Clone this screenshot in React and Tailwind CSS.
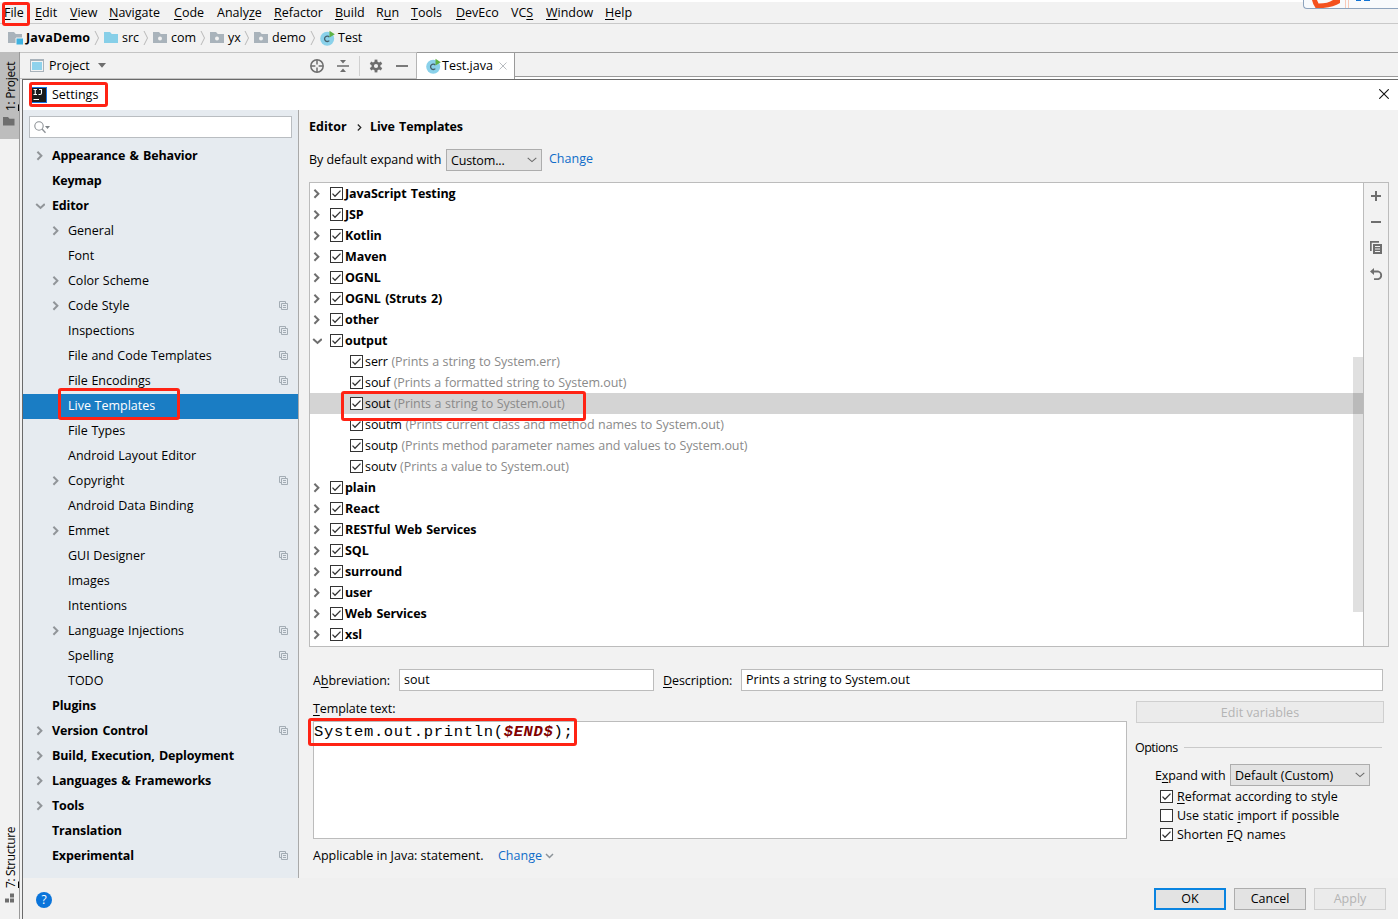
import React from "react";

/* Text with one underlined mnemonic letter, marked by a preceding "_" */
function Mn({ t }) {
  const i = t.indexOf("_");
  if (i < 0) return t;
  return (
    <>
      {t.slice(0, i)}
      <span className="underline decoration-1 underline-offset-2">{t[i + 1]}</span>
      {t.slice(i + 2)}
    </>
  );
}

const MENU = [
  ["_File", "w-[31px]"],
  ["_Edit", "w-[35px]"],
  ["_View", "w-[39px]"],
  ["_Navigate", "w-[65px]"],
  ["_Code", "w-[43px]"],
  ["Analy_ze", "w-[57px]"],
  ["_Refactor", "w-[61px]"],
  ["_Build", "w-[41px]"],
  ["R_un", "w-[35px]"],
  ["_Tools", "w-[45px]"],
  ["_DevEco", "w-[55px]"],
  ["VC_S", "w-[35px]"],
  ["_Window", "w-[59px]"],
  ["_Help", "w-[40px]"],
];

function ClassIcon() {
  return (
    <svg width="16" height="16" viewBox="0 0 16 16" className="shrink-0">
      <circle cx="7.2" cy="8.7" r="7" fill="#8ad1ea" />
      <path d="M9.3 7A2.7 2.7 0 1 0 9.3 10.6" fill="none" stroke="#45606c" strokeWidth="1.3" />
      <path d="M9.5 0.8L14.8 4.2L9.5 7.6Z" fill="#5fb244" />
    </svg>
  );
}

function Folder({ kind }) {
  return (
    <svg width="16" height="14" viewBox="0 0 16 14" className="shrink-0">
      <path d="M0 1H6L7.8 3H14V12H0Z" fill={kind === "src" ? "#87cfe8" : "#a9b3bb"} />
      {kind === "pkg" && <circle cx="7" cy="7.4" r="2" fill="#f2f2f2" />}
      {kind === "module" && <path d="M8 7H15.5V14H8Z" fill="#3fb2e0" stroke="#f2f2f2" strokeWidth="1" />}
    </svg>
  );
}

function Sep() {
  return (
    <svg width="6" height="16" viewBox="0 0 6 16" className="shrink-0">
      <path d="M1 1L4.5 8L1 15" fill="none" stroke="#b9b9b9" strokeWidth="1" />
    </svg>
  );
}

function Arrow({ open, dark }) {
  const c = dark ? "#6e6e6e" : "#919599";
  return (
    <svg width="10" height="10" viewBox="0 0 10 10" className="shrink-0">
      <path d={open ? "M1.2 3L5.5 7L9.8 3" : "M2.4 0.8L6.4 4.8L2.4 8.8"} fill="none" stroke={c} strokeWidth="2" />
    </svg>
  );
}

function Chevron() {
  return (
    <svg width="10" height="6" viewBox="0 0 10 6" className="shrink-0">
      <path d="M0.7 0.8L5 4.6L9.3 0.8" fill="none" stroke="#6b6b6b" strokeWidth="1.1" />
    </svg>
  );
}

function CopyMark() {
  return (
    <svg width="9" height="9" viewBox="0 0 9 9" className="shrink-0">
      <path d="M2 6.5H0.5V0.5H6.5V2M2.5 2.5H8.5V8.5H2.5ZM4 4.5H7M4 6.5H7" fill="none" stroke="#a3acb4" strokeWidth="1" />
    </svg>
  );
}

function Check({ on = true }) {
  return (
    <svg width="13" height="13" viewBox="0 0 13 13" className="shrink-0">
      <rect x="0.5" y="0.5" width="12" height="12" fill="#fff" stroke="#333" />
      {on && <path d="M2.5 6.6L5 9.2L10.5 3.6" fill="none" stroke="#333" strokeWidth="1.3" />}
    </svg>
  );
}

// [label, level, arrow ("r" closed, "d" open, "" none), has project mark]
const NAV = [
  ["Appearance & Behavior", 0, "r", 0],
  ["Keymap", 0, "", 0],
  ["Editor", 0, "d", 0],
  ["General", 1, "r", 0],
  ["Font", 1, "", 0],
  ["Color Scheme", 1, "r", 0],
  ["Code Style", 1, "r", 1],
  ["Inspections", 1, "", 1],
  ["File and Code Templates", 1, "", 1],
  ["File Encodings", 1, "", 1],
  ["Live Templates", 1, "", 0],
  ["File Types", 1, "", 0],
  ["Android Layout Editor", 1, "", 0],
  ["Copyright", 1, "r", 1],
  ["Android Data Binding", 1, "", 0],
  ["Emmet", 1, "r", 0],
  ["GUI Designer", 1, "", 1],
  ["Images", 1, "", 0],
  ["Intentions", 1, "", 0],
  ["Language Injections", 1, "r", 1],
  ["Spelling", 1, "", 1],
  ["TODO", 1, "", 0],
  ["Plugins", 0, "", 0],
  ["Version Control", 0, "r", 1],
  ["Build, Execution, Deployment", 0, "r", 0],
  ["Languages & Frameworks", 0, "r", 0],
  ["Tools", 0, "r", 0],
  ["Translation", 0, "", 0],
  ["Experimental", 0, "", 1],
];

const TEMPLATES = [
  ["JavaScript Testing"],
  ["JSP"],
  ["Kotlin"],
  ["Maven"],
  ["OGNL"],
  ["OGNL (Struts 2)"],
  ["other"],
  ["output"],
  ["serr", "(Prints a string to System.err)"],
  ["souf", "(Prints a formatted string to System.out)"],
  ["sout", "(Prints a string to System.out)"],
  ["soutm", "(Prints current class and method names to System.out)"],
  ["soutp", "(Prints method parameter names and values to System.out)"],
  ["soutv", "(Prints a value to System.out)"],
  ["plain"],
  ["React"],
  ["RESTful Web Services"],
  ["SQL"],
  ["surround"],
  ["user"],
  ["Web Services"],
  ["xsl"],
];

function MenuBar() {
  return (
    <div className="flex h-[24px] shrink-0 border-t-2 border-b border-t-white border-b-[#c9c9c9] pl-1">
      {MENU.map(([t, w]) => (
        <div key={t} className={"flex shrink-0 items-center whitespace-nowrap " + w}>
          <span><Mn t={t} /></span>
        </div>
      ))}
    </div>
  );
}

function NavBar() {
  return (
    <div className="flex h-[28px] shrink-0 items-center pl-2">
      <div className="flex w-[86px] items-center gap-[2px]"><Folder kind="module" /><b className="tracking-[0.15px]">JavaDemo</b></div>
      <div className="flex w-[10px]"><Sep /></div>
      <div className="flex w-[39px] items-center gap-[2px]"><Folder kind="src" />src</div>
      <div className="flex w-[10px]"><Sep /></div>
      <div className="flex w-[47px] items-center gap-[2px]"><Folder kind="pkg" />com</div>
      <div className="flex w-[10px]"><Sep /></div>
      <div className="flex w-[34px] items-center gap-[2px]"><Folder kind="pkg" />yx</div>
      <div className="flex w-[10px]"><Sep /></div>
      <div className="flex w-[56px] items-center gap-[2px]"><Folder kind="pkg" />demo</div>
      <div className="flex w-[10px]"><Sep /></div>
      <div className="flex items-center gap-[2px]"><ClassIcon />Test</div>
    </div>
  );
}

function LeftStripe() {
  return (
    <div className="flex w-[20px] shrink-0 flex-col justify-between border-r border-[#9a9a9a]">
      <div className="flex h-[87px] flex-col items-center bg-[#bdbdbd] pt-[6px]">
        <div className="ml-[2px] h-[53px] rotate-180 text-[12px] leading-[16px] tracking-[-0.3px] whitespace-nowrap [writing-mode:vertical-rl]">
          <span className="underline underline-offset-1">1</span>: Project
        </div>
        <svg width="12" height="10" viewBox="0 0 12 10" className="mt-[5px] -ml-px">
          <path d="M0 1H5L6.5 2.7H11.5V9.5H0Z" fill="#6e6e6e" />
        </svg>
      </div>
      <div className="flex h-[93px] flex-col items-center">
        <div className="ml-[2px] h-[62px] rotate-180 text-[12px] leading-[16px] tracking-[-0.35px] whitespace-nowrap [writing-mode:vertical-rl]">
          <span className="underline underline-offset-1">7</span>: Structure
        </div>
        <svg width="10" height="10" viewBox="0 0 10 10" className="mt-[5px]">
          <path d="M5 0.5H9V4.5H5ZM0 5.5H4V9.5H0ZM5 5.5H9V9.5H5Z" fill="#6e6e6e" />
        </svg>
      </div>
    </div>
  );
}

function ToolHeader() {
  return (
    <div className="flex h-[27px] shrink-0">
      <div className="flex w-[397px] shrink-0 items-center border-t border-r border-b border-[#c4c4c4] border-r-[#b5b5b5] pl-[10px]">
        <svg width="14" height="13" viewBox="0 0 14 13" className="shrink-0">
          <rect x="0.5" y="0.5" width="13" height="12" fill="#f4f4f4" stroke="#a9b3bb" />
          <rect x="0" y="0" width="14" height="2" fill="#a9b3bb" />
          <rect x="2" y="3" width="10" height="8" fill="#8fd2ec" />
        </svg>
        <span className="ml-[5px] w-[49px]">Project</span>
        <svg width="8" height="5" viewBox="0 0 8 5"><path d="M0 0H8L4 4.8Z" fill="#6e6e6e" /></svg>
        <svg width="14" height="14" viewBox="0 0 14 14" className="ml-[204px] shrink-0">
          <circle cx="7" cy="7" r="6.2" fill="none" stroke="#6e6e6e" strokeWidth="1.5" />
          <path d="M7 1V5.4M7 8.6V13M1 7H5.4M8.6 7H13" stroke="#6e6e6e" strokeWidth="1.5" />
        </svg>
        <svg width="12" height="12" viewBox="0 0 12 12" className="ml-[13px] shrink-0">
          <path d="M0 5.2H12V6.8H0ZM3 0H9L6 3.4ZM3 12H9L6 8.6Z" fill="#6e6e6e" />
        </svg>
        <div className="ml-[10px] h-[20px] w-px bg-[#d0d0d0]" />
        <svg width="14" height="14" viewBox="0 0 14 14" className="ml-[9px] shrink-0">
          <g fill="#6e6e6e">
            <rect x="5.6" y="0.6" width="2.8" height="12.8" />
            <rect x="5.6" y="0.6" width="2.8" height="12.8" transform="rotate(60 7 7)" />
            <rect x="5.6" y="0.6" width="2.8" height="12.8" transform="rotate(120 7 7)" />
          </g>
          <circle cx="7" cy="7" r="3.3" fill="none" stroke="#6e6e6e" strokeWidth="2.4" />
          <circle cx="7" cy="7" r="2.1" fill="#f2f2f2" />
        </svg>
        <div className="ml-[13px] h-[2px] w-[12px] bg-[#7a7a7a]" />
      </div>
      <div className="flex w-[98px] shrink-0 items-center border-t border-r border-[#9a9a9a] bg-white pl-[9px]">
        <ClassIcon />
        <span className="w-[57px]">Test.java</span>
        <svg width="8" height="8" viewBox="0 0 8 8"><path d="M0.5 0.5L7.5 7.5M7.5 0.5L0.5 7.5" stroke="#b8bcc0" strokeWidth="1" /></svg>
      </div>
      <div className="flex min-w-0 flex-1 flex-col bg-white">
        <div className="h-[25px] border-t border-b border-[#9a9a9a] bg-[#f2f2f2]" />
      </div>
    </div>
  );
}

function NavTree() {
  return (
    <div className="flex w-[276px] shrink-0 flex-col border-r border-[#a9a9a9] bg-[#e6ebf0]">
      <div className="mx-[6px] mt-[6px] mb-[6px] flex h-[22px] shrink-0 items-center border border-[#b9bdc1] bg-white pl-1">
        <svg width="17" height="13" viewBox="0 0 17 13">
          <circle cx="5" cy="5" r="4.2" fill="none" stroke="#8c9196" strokeWidth="1.1" />
          <path d="M8 8L11.5 11.8" stroke="#8c9196" strokeWidth="1.3" />
          <path d="M11 5H16L13.5 8Z" fill="#7f8488" />
        </svg>
      </div>
      {NAV.map(([t, lv, a, mark]) => (
        <div
          key={t}
          className={
            "flex h-[25px] shrink-0 items-center pr-[10px] pb-[2px] " +
            (lv ? "pl-[28px] [word-spacing:0.4px] " : "pl-[12px] font-bold tracking-[-0.15px] [word-spacing:1.2px] ") +
            (t === "Live Templates" ? "bg-[#1a7dc4] text-white" : "")
          }
        >
          <div className="w-[17px] shrink-0">{a && <Arrow open={a === "d"} />}</div>
          <span className="flex-1 whitespace-nowrap">{t}</span>
          {!!mark && <CopyMark />}
        </div>
      ))}
    </div>
  );
}

function TemplateList() {
  return (
    <div className="mt-[11px] ml-[10px] flex h-[465px] w-[1080px] shrink-0 border border-[#bcbcbc]">
      <div className="relative w-[1054px] shrink-0 border-r border-[#bcbcbc] bg-white">
        {TEMPLATES.map(([t, d]) => (
          <div
            key={t}
            className={
              "flex h-[21px] items-center whitespace-nowrap " +
              (d ? "pl-[40px] " : "pl-[2px] ") +
              (t === "sout" ? "bg-[#d4d4d4]" : "")
            }
          >
            {!d && <div className="flex w-[18px]"><Arrow open={t === "output"} dark /></div>}
            <Check />
            {d ? (
              <span className="ml-[2px] tracking-[-0.07px] [word-spacing:0.4px]">{t} <span className="text-[#8a8a8a]">{d}</span></span>
            ) : (
              <b className="ml-[2px] tracking-[-0.1px] [word-spacing:1.2px]">{t}</b>
            )}
          </div>
        ))}
        <div className="absolute top-[174px] right-0 h-[255px] w-[10px] bg-black/12" />
      </div>
      <div className="flex flex-1 flex-col items-center">
        <svg width="10" height="10" viewBox="0 0 10 10" className="mt-[8px]"><path d="M0 5H10M5 0V10" stroke="#6e6e6e" strokeWidth="2" /></svg>
        <svg width="10" height="2" viewBox="0 0 10 2" className="mt-[20px]"><path d="M0 1H10" stroke="#6e6e6e" strokeWidth="2" /></svg>
        <svg width="13" height="13" viewBox="0 0 13 13" className="mt-[18px]">
          <path d="M0 0H9V1.7H1.7V10H0Z" fill="#6e6e6e" />
          <rect x="3" y="3" width="9" height="10" fill="#6e6e6e" />
          <path d="M5 5.5H10M5 8H10M5 10.5H10" stroke="#f2f2f2" strokeWidth="1" />
        </svg>
        <svg width="13" height="13" viewBox="0 0 13 13" className="mt-[14px]">
          <path d="M3 3.5H8.3A4 4 0 0 1 8.3 11.2H4" fill="none" stroke="#6e6e6e" strokeWidth="1.8" />
          <path d="M0 3.5L4 0V7Z" fill="#6e6e6e" />
        </svg>
      </div>
    </div>
  );
}

function Details() {
  return (
    <>
      <div className="mt-[22px] ml-[14px] flex h-[22px] shrink-0 items-center whitespace-nowrap">
        <span className="w-[86px] pt-[2px] tracking-[-0.06px]"><Mn t="A_bbreviation:" /></span>
        <div className="flex h-[22px] w-[255px] items-center border border-[#bcbcbc] bg-white pl-1">sout</div>
        <span className="ml-[9px] w-[78px] pt-[2px] tracking-[-0.06px]"><Mn t="_Description:" /></span>
        <div className="flex h-[22px] w-[642px] items-center border border-[#bcbcbc] bg-white pl-1">Prints a string to System.out</div>
      </div>
      <div className="ml-[14px] flex h-[148px] shrink-0">
        <div className="w-[814px]">
          <div className="flex h-[30px] items-end pb-[3px]"><span className="leading-[18px] tracking-[-0.1px]"><Mn t="_Template text:" /></span></div>
          <div className="h-[118px] border border-[#bcbcbc] bg-white font-['Courier_New','Liberation_Mono',monospace] text-[15.5px] leading-[20px] tracking-[0.68px]">
            System.out.println(<span className="font-bold text-[#800000] italic">$END$</span>);
          </div>
        </div>
        <div className="ml-[8px] flex w-[250px] flex-col">
          <div className="mt-[10px] ml-px flex h-[22px] w-[248px] shrink-0 items-center justify-center border border-[#cfcfcf] bg-[#ebebeb] pt-px tracking-[0.05px] text-[#b4b4b4]">Edit variables</div>
          <div className="mt-[14px] flex h-[20px] shrink-0 items-center gap-[6px]"><span className="pt-px tracking-[-0.5px]">Options</span><div className="mr-[3px] h-px flex-1 bg-[#cacaca]" /></div>
          <div className="mt-[7px] ml-[20px] flex h-[22px] shrink-0 items-center">
            <span className="w-[75px] pt-px tracking-[-0.1px] whitespace-nowrap"><Mn t="E_xpand with" /></span>
            <div className="flex h-[22px] w-[140px] items-center justify-between border border-[#adadad] bg-[#e3e3e3] pr-1 pl-1"><span className="pt-px">Default (Custom)</span><Chevron /></div>
          </div>
          <div className="mt-px ml-[25px] flex shrink-0 flex-col">
            {[["_Reformat according to style", true], ["Use static _import if possible", false], ["Shorten _FQ names", true]].map(([t, on]) => (
              <div key={t} className="flex h-[19px] shrink-0 items-center gap-[4px] tracking-[-0.05px] whitespace-nowrap [word-spacing:0.7px]">
                <Check on={on} /><span><Mn t={t} /></span>
              </div>
            ))}
          </div>
        </div>
      </div>
      <div className="mt-[7px] ml-[14px] flex h-[20px] shrink-0 items-center whitespace-nowrap">
        <span className="w-[185px]">Applicable in Java: statement.</span>
        <span className="w-[47px] text-[#0f6cc9]">Change</span>
        <svg width="9" height="6" viewBox="0 0 9 6"><path d="M1 1L4.5 4.5L8 1" fill="none" stroke="#8c9399" strokeWidth="1.5" /></svg>
      </div>
    </>
  );
}

function Dialog() {
  return (
    <div className="ml-[2px] flex min-h-0 flex-1 flex-col border-t border-l border-[#6a6a6a]">
      <div className="flex h-[30px] shrink-0 items-center bg-white pr-[9px] pl-[8px]">
        <svg width="16" height="16" viewBox="0 0 16 16" className="shrink-0">
          <rect width="16" height="16" fill="#1573e6" />
          <rect y="1" width="15" height="14" fill="#1b1b1d" />
          <path d="M2.5 2.5H6M4.25 2.5V7.5M2.5 7.5H6M8 2.5H10.5V6Q10.5 7.5 9 7.5H7.5M2.5 12.5H8" fill="none" stroke="#fff" strokeWidth="1.1" />
        </svg>
        <span className="ml-[5px] flex-1">Settings</span>
        <svg width="10" height="10" viewBox="0 0 10 10" className="mb-[2px]"><path d="M0.3 0.3L9.7 9.7M9.7 0.3L0.3 9.7" stroke="#111" strokeWidth="1.1" /></svg>
      </div>
      <div className="flex h-[768px] shrink-0">
        <NavTree />
        <div className="flex min-w-0 flex-1 flex-col">
          <div className="mt-[6px] ml-[10px] flex h-[22px] shrink-0 items-center font-bold whitespace-nowrap">
            <span className="w-[48px]">Editor</span>
            <svg width="5" height="7" viewBox="0 0 5 7"><path d="M0.8 0.5L3.8 3.5L0.8 6.5" fill="none" stroke="#222" strokeWidth="1.2" /></svg>
            <span className="ml-[8px] tracking-[-0.15px] [word-spacing:1.2px]">Live Templates</span>
          </div>
          <div className="mt-[11px] ml-[10px] flex h-[22px] shrink-0 items-center whitespace-nowrap">
            <span className="w-[137px] tracking-[-0.06px]">By default expand with</span>
            <div className="flex h-[22px] w-[96px] items-center justify-between border border-[#adadad] bg-[#e3e3e3] pr-1 pl-1"><span className="pt-px tracking-[-0.15px]">Custom...</span><Chevron /></div>
            <span className="ml-[7px] pb-[2px] text-[#0f6cc9]">Change</span>
          </div>
          <TemplateList />
          <Details />
        </div>
      </div>
      <div className="flex min-h-0 flex-1 items-center bg-[#f0f0f0] pr-[12px] pl-[13px]">
        <div className="mt-[3px] flex size-[16px] items-center justify-center rounded-full bg-[#0a74da] text-[12px] text-white">?</div>
        <div className="ml-auto flex h-[22px] w-[72px] items-center justify-center border-2 border-[#0a84e0] bg-[#e3e3e3]">OK</div>
        <div className="ml-[8px] flex h-[22px] w-[72px] items-center justify-center border border-[#adadad] bg-[#e3e3e3]">Cancel</div>
        <div className="ml-[8px] flex h-[22px] w-[72px] items-center justify-center border border-[#cfcfcf] bg-[#ebebeb] text-[#b4b4b4]">Apply</div>
      </div>
    </div>
  );
}

const MARKS = [
  "left-[2px] top-[2px] w-[28px] h-[24px]",
  "left-[29px] top-[82px] w-[79px] h-[25px]",
  "left-[58px] top-[388px] w-[122px] h-[32px]",
  "left-[341px] top-[391px] w-[245px] h-[30px]",
  "left-[308px] top-[718px] w-[269px] h-[28px]",
];

export default function App() {
  return (
    <div className="relative flex h-[919px] w-[1398px] flex-col overflow-hidden bg-[#f2f2f2] font-['Open_Sans','Noto_Sans',sans-serif] text-[12.5px] leading-[18px] text-black">
      <MenuBar />
      <NavBar />
      <div className="flex min-h-0 flex-1">
        <LeftStripe />
        <div className="flex min-w-0 flex-1 flex-col">
          <ToolHeader />
          <Dialog />
        </div>
      </div>
      <div className="absolute top-0 right-0 h-[9px] w-[95px] overflow-hidden rounded-bl-sm border-b border-l border-[#8da3bd] bg-[#f8fafc]">
        <svg width="94" height="8" viewBox="0 0 94 8">
          <path d="M8 0H36L36 3Q28 8 12 8.5Q9 5 8 0Z" fill="#f4511e" />
          <path d="M13 0H29Q24 3.5 14.5 3.5Z" fill="#f8fafc" />
          <path d="M41.5 0V8M44.5 0V8" stroke="#f9c9b8" />
          <path d="M52 0H57M60 0H66" stroke="#1173d4" strokeWidth="2" />
        </svg>
      </div>
      {MARKS.map((m) => (
        <div key={m} className={"pointer-events-none absolute rounded-[3px] border-3 border-[#ff2314] " + m} />
      ))}
    </div>
  );
}
